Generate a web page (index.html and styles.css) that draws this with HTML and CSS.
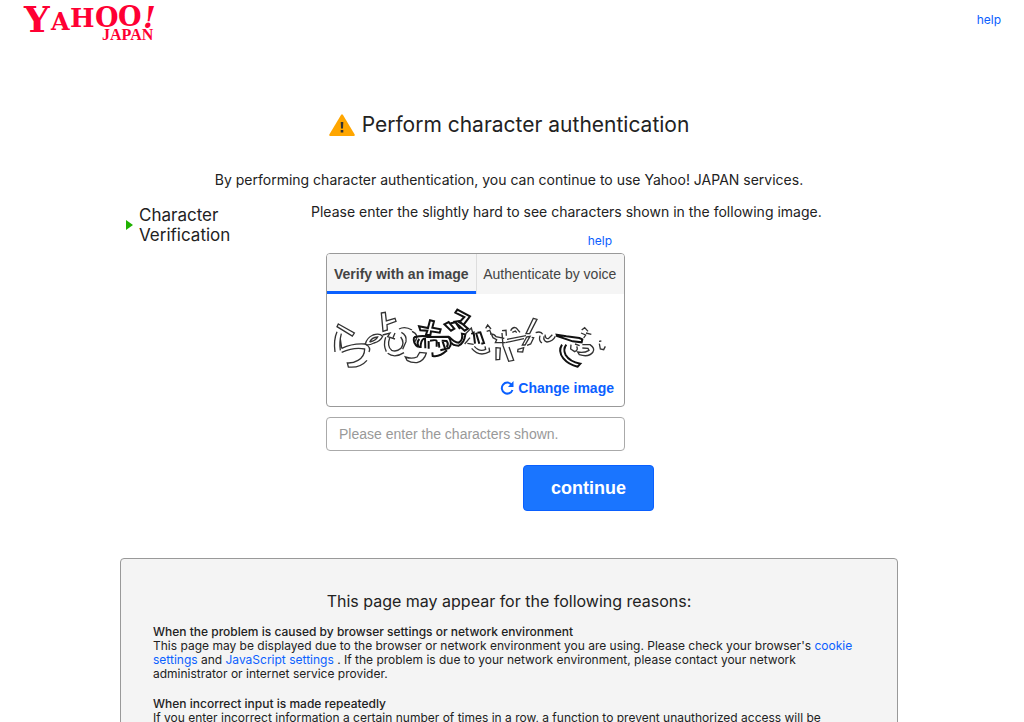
FILE: index.html
```html
<!DOCTYPE html>
<html lang="en">
<head>
    <meta charset="UTF-8">
    <meta name="viewport" content="width=device-width, initial-scale=1.0">
    <title>Character authentication - Yahoo! JAPAN</title>
    <link rel="stylesheet" href="styles.css">
</head>
<body>
    <header>
        <a href="#" class="logo">
            <svg width="140" height="38" viewBox="0 0 140 38">
                <text class="logo-main" y="27"><tspan x="4" class="logo-y">Y</tspan><tspan x="31" y="25" class="logo-a">A</tspan><tspan x="50" y="22" class="logo-h">H</tspan><tspan x="75" y="22" class="logo-o">O</tspan><tspan x="98" y="21" class="logo-o">O</tspan><tspan x="123" y="23" class="logo-mark">!</tspan></text>
                <text class="logo-sub" x="82" y="35">JAPAN</text>
            </svg>
        </a>
        <a href="#" class="header-help">help</a>
    </header>

    <main class="container">
        <h1>
            <svg width="26" height="22" viewBox="0 0 26 22">
                <path d="M12 1Q13-.5 14 1L25.700 20.500Q26 22 25 22H1Q0 22 .3 20.500Z" fill="#ffa600"/>
                <path d="M11.700 8h2.600l-.3 6.500h-2zM11.700 16h2.600v2.500h-2.600z" fill="#333"/>
            </svg>
            Perform character authentication
        </h1>
        <p class="intro">By performing character authentication, you can continue to use Yahoo! JAPAN services.</p>

        <section class="verify">
            <h2>Character Verification</h2>
            <form class="verify-form">
                <p>Please enter the slightly hard to see characters shown in the following image.</p>
                <div class="fields">
                    <a href="#" class="form-help">help</a>
                    <div class="captcha">
                        <div class="tabs">
                            <button type="button" class="tab active">Verify with an image</button>
                            <button type="button" class="tab">Authenticate by voice</button>
                        </div>
                        <svg class="captcha-image" viewBox="0 0 891 252" role="img" aria-label="Verification image">
                            <g transform="translate(-6 18)">
                                <path d="M40 72L88 99L82 108L36 80ZM36 95Q25 120 30 156M49 101Q42 128 46 151M50 145Q83 129 121 132Q139 142 132 156M50 157Q88 140 119 147Q119 170 99 181Q84 190 67 189L70 201Q105 205 126 181M46 117L50 145"/>
                                <path d="M169 39L181 37L184 63L210 55L213 64L186 74L187 90L174 94ZM121 132Q125 114 144 105Q164 98 173 109Q166 125 147 129Q127 139 121 132ZM134 126Q140 112 158 111Q153 122 134 126M173 105L195 99L188 110L210 117"/>
                                <path d="M182 112Q174 136 184 155M194 114Q185 139 200 151Q215 157 228 145Q240 128 227 111M210 99L204 113M222 87Q240 77 261 90M229 97Q246 105 243 125L233 148M188 160Q209 176 237 158M261 94Q284 104 270 125"/>
                                <path d="M241 171Q260 178 276 171L284 157L304 159Q298 182 276 188Q258 189 246 181Z"/>
                                <path class="bold" d="M282 79L309 84L315 61L327 64L322 83L347 88L344 98L318 94L316 106L303 104L307 92L286 91ZM267 112Q299 105 306 111L370 110Q384 129 372 144L346 151M322 157L323 168Q342 173 366 151M267 112Q263 130 279 141M283 117Q272 130 284 143M298 115Q286 120 287 144M300 113L301 145M311 123L311 146M315 122Q334 119 335 123L335 140M341 126L343 143M350 122L365 123Q372 132 365 141M353 125L360 145"/>
                                <path class="bold" d="M358 73L371 66L388 86L378 92ZM377 70L392 67L405 87M389 65L402 63L429 86L419 92ZM391 38L397 29L435 49L416 74L403 67L418 51ZM372 110Q388 128 401 128Q415 119 411 101L421 103Q418 129 401 137Q383 137 379 128"/>
                                <path d="M421 102L439 84L443 98M419 132L435 113M427 130L446 133"/>
                            </g>
                            <g transform="translate(429 18)">
                                <path class="bold" d="M4 102L11 98L15 131M18 98L28 131M22 98L31 97L42 129L34 131"/>
                                <path d="M5 145Q28 173 59 155L57 143M13 139Q29 157 47 148L45 139M47 85L53 75L63 87M50 94L59 91L69 113L80 119L76 128L105 128M60 102Q73 101 78 110L103 115M78 143L91 144L89 178L78 179ZM96 92L108 91L109 107M96 99L99 137L116 184L131 181L117 141M111 118L168 107M106 128L162 116M122 92Q128 79 139 84L150 97M127 97L136 93L140 98"/>
                                <path d="M190 55L201 58L179 101L168 101ZM170 111L180 109L165 135L157 135ZM185 112L191 113L182 132L171 136M144 148L161 143L158 156L143 155ZM197 98Q213 92 218 103M210 107Q205 123 216 129M222 109Q219 122 231 126Q249 125 256 109M225 104Q226 117 235 116L247 104"/>
                                <path class="bold" d="M260 104L289 109L328 114L337 118L335 127L308 124L261 108ZM276 134Q263 154 280 175Q296 194 323 200L331 191Q299 185 287 165Q278 148 289 134"/>
                                <path d="M335 90L344 83L354 94M333 99L347 105L341 114M348 99L364 103M303 134L302 147L314 155Q326 150 320 139M315 132L329 137M337 134L360 134Q376 145 369 156Q357 173 328 164L323 156Q342 160 357 151L354 145L337 144M387 124L394 123M388 131L391 147L401 149L406 139"/>
                            </g>
                        </svg>
                        <button type="button" class="change">
                            <svg width="14" height="14" viewBox="0 0 14 14">
                                <path d="M11.500 3.500A5.500 5.500 0 1 0 12.500 9" fill="none" stroke="#0a60ff" stroke-width="2"/>
                                <path d="M13.500 0V6H8Z" fill="#0a60ff"/>
                            </svg>
                            Change image
                        </button>
                    </div>
                    <input type="text" name="characters" aria-label="Characters" placeholder="Please enter the characters shown.">
                </div>
                <button type="submit" class="continue">continue</button>
            </form>
        </section>

        <section class="reasons">
            <h2>This page may appear for the following reasons:</h2>
            <h3>When the problem is caused by browser settings or network environment</h3>
            <p>This page may be displayed due to the browser or network environment you are using. Please check your browser's <a href="#">cookie settings</a> and <a href="#">JavaScript settings</a> . If the problem is due to your network environment, please contact your network administrator or internet service provider.</p>
            <h3>When incorrect input is made repeatedly</h3>
            <p>If you enter incorrect information a certain number of times in a row, a function to prevent unauthorized access will be</p>
        </section>
    </main>
</body>
</html>
```
FILE: styles.css
```css
* {
    box-sizing: border-box;
}
body {
    font-family: Inter, "Noto Sans", sans-serif;
    font-size: 14px;
    line-height: 20px;
    color: #222;
    background-color: #fff;
    margin: 0;
    height: 100vh;
    overflow: hidden;
}
h1, h2, h3, p {
    margin: 0;
    font-weight: normal;
}
a {
    color: #0a60ff;
    text-decoration: none;
}
button {
    font-family: "Liberation Sans", Arial, sans-serif;
    cursor: pointer;
}
header {
    display: flex;
    justify-content: space-between;
    padding: 5px 23px 0 20px;
    height: 60px;
}
.logo svg {
    overflow: visible;
}
.logo-main {
    font-family: "DejaVu Serif", serif;
    font-weight: bold;
}
.logo-main, .logo-sub {
    fill: #ff0033;
}
.logo-y { font-size: 36px; }
.logo-a { font-size: 24px; }
.logo-h { font-size: 26px; }
.logo-o { font-size: 27px; }
.logo-mark {
    font-size: 29px;
    font-style: italic;
}
.logo-sub {
    font-family: "Liberation Serif", serif;
    font-weight: bold;
    font-size: 16px;
}
.header-help, .form-help {
    font-size: 12px;
}
.header-help {
    padding-top: 5px;
}
.container {
    max-width: 778px;
    margin: 0 auto;
    position: relative;
    right: 3px;
}
h1 {
    display: flex;
    justify-content: center;
    align-items: center;
    gap: 7px;
    padding-top: 50px;
    font-size: 21px;
    line-height: 30px;
}
.intro {
    text-align: center;
    margin-top: 30px;
}
.verify {
    display: flex;
    margin-top: 12px;
}
.verify h2 {
    display: flex;
    align-items: center;
    gap: 6px;
    width: 191px;
    height: 40px;
    padding-left: 6px;
    padding-right: 60px;
    margin-top: 3px;
    font-size: 17px;
}
.verify h2::before {
    content: "";
    border: 5px solid transparent;
    border-left: 7px solid #1fb100;
    border-right: 0;
}
.verify-form {
    flex: 1;
}
.fields {
    width: 299px;
    margin-left: 15px;
}
.form-help {
    display: block;
    text-align: right;
    padding-right: 13px;
    margin-top: 9px;
}
.captcha {
    margin-top: 2px;
    border: 1px solid #999;
    border-radius: 4px;
    overflow: hidden;
}
.tabs {
    display: flex;
    background-color: #f5f5f5;
}
.tab {
    flex: 1;
    height: 40px;
    padding: 2px 0 0;
    border: 0;
    border-bottom: 3px solid transparent;
    background: none;
    color: #444;
    font-size: 14px;
    white-space: nowrap;
}
.tab.active {
    border-bottom-color: #0a60ff;
    font-weight: bold;
    box-shadow: 1px 0 #ddd;
}
.captcha-image {
    display: block;
    width: 100%;
    fill: none;
    stroke: #333;
    stroke-width: 4;
}
.captcha-image .bold {
    stroke: #111;
    stroke-width: 6;
}
.change {
    display: flex;
    align-items: center;
    gap: 4px;
    margin: 0 0 8px auto;
    padding: 0 10px 0 0;
    height: 20px;
    border: 0;
    background: none;
    color: #0a60ff;
    font-size: 14px;
    font-weight: bold;
}
.fields input {
    display: block;
    width: 100%;
    height: 34px;
    margin-top: 10px;
    padding: 0 12px;
    border: 1px solid #aaa;
    border-radius: 4px;
    font-family: "Liberation Sans", Arial, sans-serif;
    font-size: 14px;
}
.fields input::placeholder {
    color: #999;
}
.continue {
    display: block;
    width: 131px;
    height: 46px;
    margin-top: 14px;
    margin-left: 212px;
    border: 1px solid #0a60ff;
    border-radius: 4px;
    background-color: #1a75ff;
    color: #fff;
    font-size: 18px;
    font-weight: bold;
}
.reasons {
    margin-top: 47px;
    padding: 32px;
    border: 1px solid #999;
    border-radius: 4px;
    background-color: #f4f4f4;
    font-size: 12px;
    line-height: 14px;
}
.reasons h2 {
    font-size: 16px;
    line-height: 20px;
    text-align: center;
    margin-bottom: 14px;
}
.reasons h3 {
    font-size: 12px;
    font-weight: 500;
}
.reasons p {
    margin-bottom: 16px;
}
```
